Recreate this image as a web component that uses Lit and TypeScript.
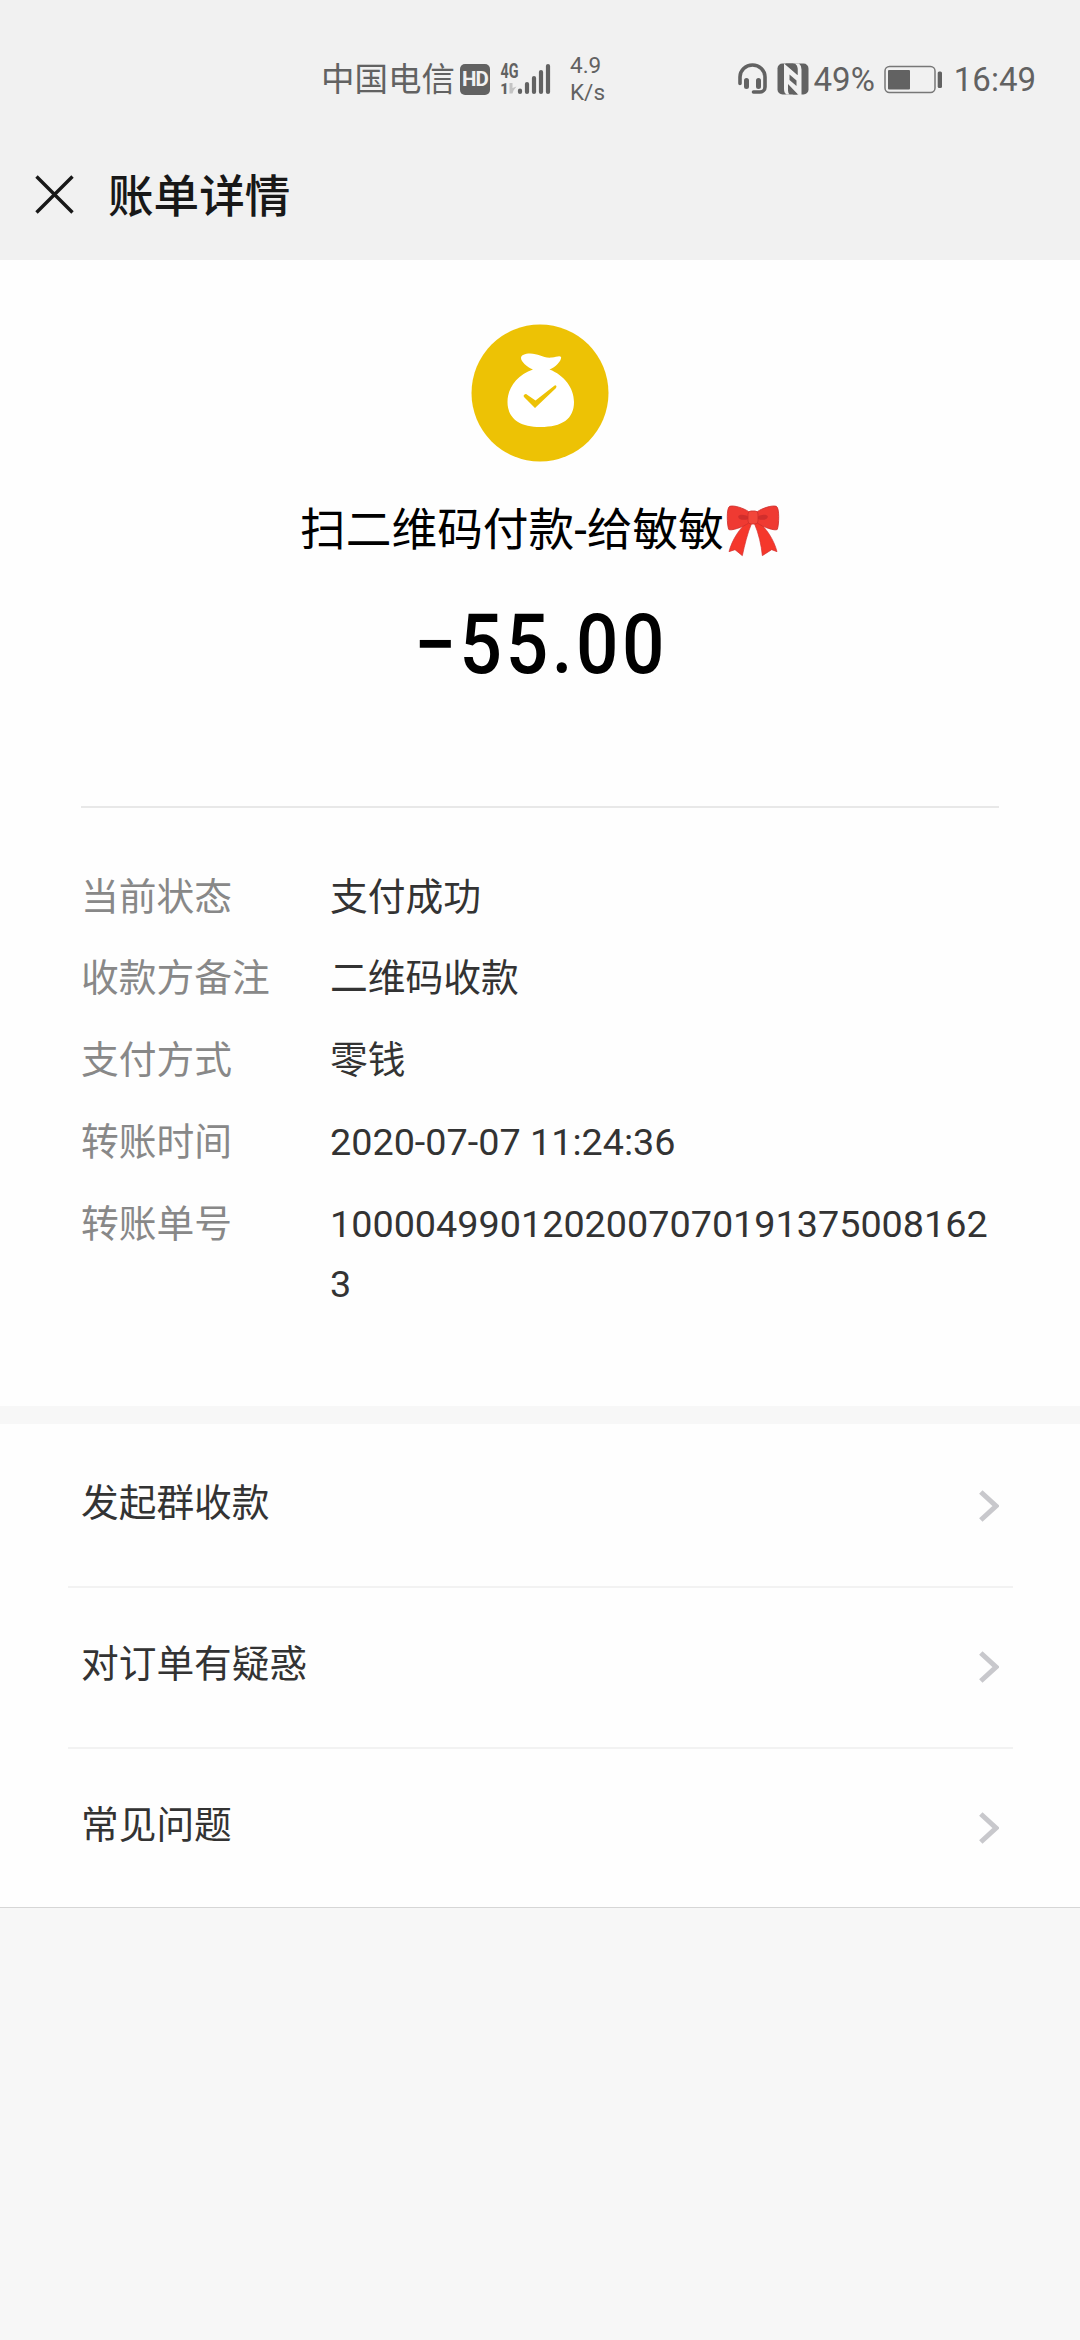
import { LitElement, html, css, svg } from "lit";
import { customElement, property } from "lit/decorators.js";

@customElement("status-bar")
class StatusBar extends LitElement {
  static styles = css`
    :host {
      display: flex;
      box-sizing: border-box;
      height: 132px;
      padding: 26px 44px 0 321px;
      align-items: center;
      justify-content: space-between;
      color: #626262;
      font-size: 33.5px;
      line-height: 40px;
      white-space: nowrap;
    }
    .group { display: flex; align-items: center; }
    .carrier { width: 139px; }
    .carrier, .reading { padding-top: 1px; }
    .reading { font-size: 33px; }
    .hd {
      width: 30px; height: 31px; border-radius: 5px;
      background: #626262; color: #f1f1f1;
      font: 700 20.5px/31px Roboto, sans-serif;
      text-align: center; letter-spacing: -1px;
    }
    .signal { margin-left: 10px; }
    .net { font: 700 20px Roboto, sans-serif; fill: #626262; }
    .sim { font: 900 14.5px Roboto, sans-serif; fill: #626262; }
    .speed {
      margin-left: 18px;
      font-size: 22.5px; line-height: 27px;
    }
    .nfc { margin: 0 5px 0 9px; }
    .battery { margin: 0 11px 0 9px; }
    svg { display: block; overflow: visible; }
  `;
  render() {
    return html`
      <div class="group">
        <span class="carrier">中国电信</span>
        <span class="hd">HD</span>
        <svg class="signal" width="52" height="32" viewBox="500 62 52 32">
          <text class="net" x="500.5" y="76.5" textLength="18" lengthAdjust="spacingAndGlyphs">4G</text>
          <text class="sim" x="500.3" y="92.7">1</text>
          <path d="M509.500 82h3v5l4-1.500-3 4-1 3h-3z" fill="#c4c4c4" />
          <g stroke="#626262" stroke-width="4.200" stroke-linecap="round">
            <path d="M520 89.500v1.500M527 83v8M534 77v14M541 71v20M548 65v26" />
          </g>
        </svg>
        <div class="speed"><div>4.9</div><div>K/s</div></div>
      </div>
      <div class="group">
        <svg width="30" height="32" viewBox="737 62 30 32" fill="none" stroke="#626262">
          <path d="M739 82.500V76a12.500 12 0 0 1 25 0v10a5 5 0 0 1-5 5h-6.500" stroke-width="3.600" stroke-linecap="round" />
          <path d="M745.500 79.500v6M757.500 79.500v6" stroke-width="5" stroke-linecap="round" />
        </svg>
        <svg class="nfc" width="32" height="32" viewBox="0 0 32 32">
          <rect x="0.500" y="0.500" width="31" height="31" rx="5" fill="#626262" />
          <path d="M7 0.500 20.500 12V5.500q0-3-2.500-5h4q2.500 2 2.500 6v25.500h-3L11 21v6q0 3 1.500 4.500H9.500Q7 30 7 26z" fill="#f1f1f1" />
          <path d="M8.500 0.500H16q4.500 1.500 4.500 6V12z" fill="#626262" />
          <path d="M11 22.500 20.500 31.500H16.500Q11 30 11 26z" fill="#626262" />
          <path d="M12.500 11.500 19.500 17.500v5.500l-7-6z" fill="#626262" />
        </svg>
        <span class="reading">49%</span>
        <svg class="battery" width="59" height="32" viewBox="885 62 59 32">
          <rect x="886" y="65.500" width="50" height="26" rx="4.500" fill="none" stroke="#777" stroke-width="1.500" />
          <rect x="889" y="69" width="22" height="19.500" rx="1" fill="#626262" />
          <rect x="938.700" y="70.500" width="4.300" height="16.500" rx="1.500" fill="#626262" />
        </svg>
        <span class="reading">16:49</span>
      </div>
    `;
  }
}

@customElement("detail-row")
class DetailRow extends LitElement {
  @property() label = "";
  @property() value = "";
  static styles = css`
    :host { display: flex; font-size: 37.75px; line-height: 60px; }
    .label { flex: 0 0 249px; color: #888; }
    .value { flex: 1; min-width: 0; color: #333; word-break: break-all; }
  `;
  render() {
    return html`<span class="label">${this.label}</span><span class="value">${this.value}</span>`;
  }
}

@customElement("link-row")
class LinkRow extends LitElement {
  @property() label = "";
  static styles = css`
    :host {
      display: flex; box-sizing: border-box; height: 161px;
      margin: 0 67px 0 68px; padding: 0 14px 7px 13px;
      align-items: center; justify-content: space-between;
      border-bottom: 2px solid #f2f2f2;
      color: #333; font-size: 37.7px; line-height: 60px;
    }
    :host(:last-of-type) { border-bottom-color: transparent; }
    svg { display: block; margin-top: 5px; }
  `;
  render() {
    return html`<span>${this.label}</span>
      <svg width="20" height="32" viewBox="0 0 20 32" fill="none" stroke="#c8c8cc" stroke-width="5">
        <path d="M1.800 2 17 16 1.800 30" />
      </svg>`;
  }
}

const moneyBag = svg`
  <circle cx="69" cy="69" r="68.500" fill="#edc205" />
  <path fill="#fff" d="M62 45.500C56 43 50 37.500 50 34c0-3 4-4.500 9-4.500 9 0 13 5 22 4 4-.5 8-2.500 9-.5 1 3-5 10-11.500 12.500C93 51 103 64 103 78c0 17-12 25-33.500 25S36.500 94 36.500 78C36.500 64 46 51 62 45.500z" />
  <path fill="#edc205" d="M53.500 70.500q1.500-1 3 .5l8 5.500L83 62q1.500-1.200 2.200-.2.800 1-.4 2.400L64 84 53 73q-1.200-1.400.5-2.500z" />
`;

const ribbonBow = svg`
  <path fill="#f5372b" stroke="#d32f2f" stroke-width="2" stroke-linejoin="round" d="M84 76C60 92 36 130 27 165l18-6 22 18C74 145 82 110 95 80z" />
  <path fill="#f5372b" stroke="#d32f2f" stroke-width="2" stroke-linejoin="round" d="M114 76c24 16 48 54 57 89l-16-6-28 18C124 145 116 110 103 80z" />
  <path fill="#ef3a32" stroke="#cf2f2c" stroke-width="2.500" d="M86 45C70 34 42 25 29 29c-10 5-8 55-3 69 6 6 44-7 60-19z" />
  <path fill="#ef3a32" stroke="#cf2f2c" stroke-width="2.500" d="M112 45c16-11 44-20 57-16 10 5 8 55 3 69-6 6-44-7-60-19z" />
  <path fill="#d12e2c" d="M85 60c-10-7-25-8-30-2-3 10 14 15 30 9zM113 60c10-7 25-8 30-2 3 10-14 15-30 9z" />
  <rect x="84" y="43" width="30" height="39" rx="9" fill="#f2463a" stroke="#cf2f2c" stroke-width="2.500" />
`;

@customElement("app-root")
class AppRoot extends LitElement {
  static styles = css`
    :host {
      display: block; width: 1080px; height: 2340px; overflow: hidden;
      background: #f7f7f7;
      font-family: Roboto, "Noto Sans CJK SC", sans-serif;
    }
    .head { background: #f1f1f1; height: 260px; }
    .nav {
      display: flex; align-items: center; height: 125px;
      padding-left: 35px; gap: 34px;
    }
    .nav-title {
      padding-top: 6px;
      font-size: 45.6px; line-height: 60px; font-weight: 500; color: #181818;
    }
    svg { display: block; }
    .card { background: #fefefe; box-sizing: border-box; }
    .bill { height: 1146px; padding: 64px 81px 0; }
    .summary {
      display: flex; flex-direction: column; align-items: center;
      height: 484px; box-sizing: border-box;
      border-bottom: 2px solid #e8e8e8; margin-bottom: 58.500px;
    }
    .payee {
      display: flex; align-items: center; margin-top: 39px; gap: 2px;
      font-size: 45.7px; line-height: 60px; color: #000; white-space: nowrap;
    }
    .amount {
      margin-top: 38px; padding-left: 3px; font-size: 83px; line-height: 92px;
      font-weight: 500; color: #000; white-space: nowrap;
      letter-spacing: 4px; transform: scaleX(0.9);
    }
    .details { display: flex; flex-direction: column; gap: 21.8px; }
    .links { margin-top: 18px; padding-top: 3px; border-bottom: 1px solid #d6d6d6; height: 484px; }
  `;

  private rows = [
    ["当前状态", "支付成功"],
    ["收款方备注", "二维码收款"],
    ["支付方式", "零钱"],
    ["转账时间", "2020-07-07 11:24:36"],
    ["转账单号", "10000499012020070701913750081623"],
  ];

  private links = ["发起群收款", "对订单有疑惑", "常见问题"];

  render() {
    return html`
      <div class="head">
        <status-bar></status-bar>
        <div class="nav">
          <svg width="39" height="39" viewBox="0 0 39 39" stroke="#181818" stroke-width="3.400">
            <path d="M1.500 1.500 37.500 37.500M37.500 1.500 1.500 37.500" />
          </svg>
          <span class="nav-title">账单详情</span>
        </div>
      </div>
      <div class="card bill">
        <div class="summary">
          <svg width="138" height="138" viewBox="0 0 138 138">${moneyBag}</svg>
          <div class="payee">
            <span>扫二维码付款-给敏敏</span>
            <svg width="54" height="54" viewBox="18 22 162 162" role="img" aria-label="🎀">${ribbonBow}</svg>
          </div>
          <div class="amount">−55.00</div>
        </div>
        <div class="details">
          ${this.rows.map(([label, value]) => html`<detail-row .label=${label} .value=${value}></detail-row>`)}
        </div>
      </div>
      <div class="card links">
        ${this.links.map((label) => html`<link-row .label=${label}></link-row>`)}
      </div>
    `;
  }
}
